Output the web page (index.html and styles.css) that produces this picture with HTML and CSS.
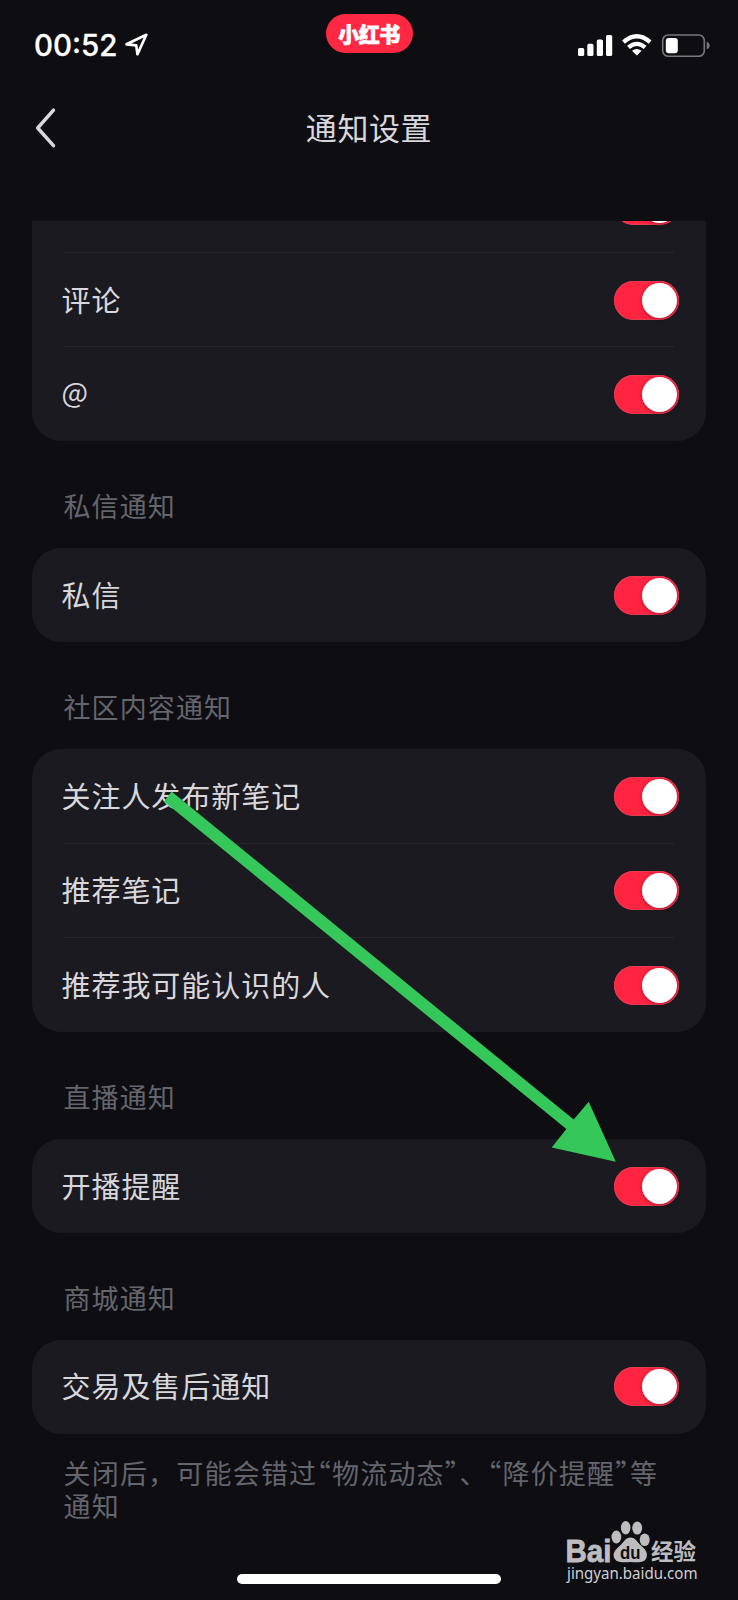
FILE: index.html
```html
<!DOCTYPE html>
<html lang="zh-CN">
<head>
<meta charset="utf-8">
<title>通知设置</title>
<link rel="stylesheet" href="styles.css">
</head>
<body>
<div class="screen">
  <header class="status">
    <div class="status-left">
      <span class="time">00:52</span>
      <svg class="location" width="24" height="24" viewBox="0 0 24 24"><path d="M1.5 11.3 21.3 1.8 12.5 21.2 11.2 12.4Z"/></svg>
    </div>
    <div class="badge">小红书</div>
    <svg class="status-icons" width="134" height="26" viewBox="576 32 134 26">
      <g fill="#fff">
        <rect x="578" y="48" width="6.2" height="8" rx="1.6"/>
        <rect x="587.3" y="43.8" width="6.2" height="12.2" rx="1.6"/>
        <rect x="596.8" y="39.4" width="6.2" height="16.6" rx="1.6"/>
        <rect x="606" y="35" width="6.2" height="21" rx="1.6"/>
        <path d="M636.8 55.6 632 50.8Q636.8 47.2 641.6 50.8Z"/>
      </g>
      <g fill="none" stroke="#fff" stroke-width="4.2">
        <path d="M623.5 42.1Q636.8 30.4 650.1 42.1"/>
        <path d="M628.5 47.3Q636.8 40.4 645.1 47.3"/>
      </g>
      <rect x="662.7" y="35" width="41.6" height="21.3" rx="5.5" fill="none" stroke="#77767a" stroke-width="1.6"/>
      <rect x="665.8" y="38" width="12" height="15.2" rx="3" fill="#fff"/>
      <path d="M706.7 41.6Q709.8 43 709.8 45.5T706.7 49.4Z" fill="#77767a"/>
    </svg>
  </header>

  <nav class="navbar">
    <svg class="back" width="24" height="42" viewBox="0 0 24 42"><path d="M19.5 3.2 3.7 21 19.5 38.6"/></svg>
    <h1 class="title">通知设置</h1>
  </nav>

  <main class="list">
    <section class="card card-scrolled">
      <div class="row"><span></span><i class="toggle"></i></div>
      <div class="row"><span>评论</span><i class="toggle"></i></div>
      <div class="row"><span class="at">@</span><i class="toggle"></i></div>
    </section>
    <h2 class="heading">私信通知</h2>
    <section class="card">
      <div class="row"><span>私信</span><i class="toggle"></i></div>
    </section>
    <h2 class="heading">社区内容通知</h2>
    <section class="card">
      <div class="row"><span>关注人发布新笔记</span><i class="toggle"></i></div>
      <div class="row"><span>推荐笔记</span><i class="toggle"></i></div>
      <div class="row"><span>推荐我可能认识的人</span><i class="toggle"></i></div>
    </section>
    <h2 class="heading">直播通知</h2>
    <section class="card">
      <div class="row"><span>开播提醒</span><i class="toggle"></i></div>
    </section>
    <h2 class="heading">商城通知</h2>
    <section class="card">
      <div class="row"><span>交易及售后通知</span><i class="toggle"></i></div>
    </section>
    <p class="note">关闭后，可能会错过<span class="half">“</span>物流动态<span class="half">”</span>、<span class="half">“</span>降价提醒<span class="half">”</span>等<br>通知</p>
  </main>
  <div class="home-indicator"></div>

  <svg class="arrow" width="460" height="380" viewBox="160 786 460 380">
    <path d="M171.6 791.6 573.7 1119.5 588.7 1101.7 615.8 1161.7 551.7 1147.6 566.4 1129 164 801.4Z"/>
  </svg>

  <svg class="watermark" width="140" height="70" viewBox="562 1518 140 70">
    <text class="wm-bai" x="565.5" y="1561.5" textLength="46" lengthAdjust="spacingAndGlyphs">Bai</text>
    <ellipse cx="616.4" cy="1537" rx="4.9" ry="6.4"/>
    <ellipse cx="625.7" cy="1527.7" rx="4.8" ry="6.8"/>
    <ellipse cx="637.2" cy="1528.1" rx="5" ry="6.5"/>
    <ellipse cx="644.7" cy="1539.8" rx="5" ry="6.3"/>
    <path d="M630.5 1537.5C625.5 1537.5 624 1542 620 1545.5 615.5 1549.5 612.5 1553 614 1557.5 616 1562.5 621 1562.5 630.5 1562 640 1562.5 645 1562.5 646.5 1557.5 648 1553 645.5 1549.5 641 1545.5 637 1542 635.5 1537.5 630.5 1537.5Z"/>
    <text class="wm-du" x="620" y="1558.5" textLength="20.5" lengthAdjust="spacingAndGlyphs">du</text>
    <text class="wm-cn" x="651" y="1560" textLength="45" lengthAdjust="spacingAndGlyphs">经验</text>
    <text class="wm-url" x="567" y="1579" textLength="130.5" lengthAdjust="spacingAndGlyphs">jingyan.baidu.com</text>
  </svg>
</div>
</body>
</html>
```
FILE: styles.css
```css
* { box-sizing: border-box; }

body {
  margin: 0;
  background: #0e0d12;
  font-family: "Noto Sans CJK SC", sans-serif;
  color: #d8d7db;
}

.screen {
  position: relative;
  display: flex;
  flex-direction: column;
  width: 738px;
  height: 1600px;
  overflow: hidden;
}

.status {
  display: grid;
  grid-template-columns: 1fr 87px 1fr;
  height: 90px;
  padding: 14px 28px 0 34px;
}

.status-left {
  display: flex;
  align-items: center;
  gap: 6px;
  height: 62px;
}

.time {
  width: 85px;
  font: 500 29.5px/36px Inter, sans-serif;
  letter-spacing: 0;
  color: #fff;
  white-space: nowrap;
  -webkit-text-stroke: 0.3px #fff;
}

.location path {
  fill: none;
  stroke: #fff;
  stroke-width: 2.7;
  stroke-linejoin: round;
}

.badge {
  height: 39px;
  margin-left: -3px;
  width: 87px;
  border-radius: 20px;
  background: #ff2843;
  color: #fff;
  font-size: 21px;
  font-weight: 900;
  line-height: 38px;
  letter-spacing: -0.5px;
  text-align: center;
  -webkit-text-stroke: 0.7px #fff;
}

.status-icons {
  justify-self: end;
  margin-top: 18px;
}

.navbar {
  display: grid;
  grid-template-columns: 60px 1fr 60px;
  align-items: center;
  height: 76px;
  padding: 0 34px;
}

.back path {
  fill: none;
  stroke: #d8d7de;
  stroke-width: 3.5;
  stroke-linecap: round;
  stroke-linejoin: round;
}

.title {
  margin: 0;
  padding-bottom: 3px;
  font-size: 31px;
  font-weight: 400;
  line-height: 44px;
  letter-spacing: 0.6px;
  text-align: center;
}

.list {
  flex: 1;
  margin-top: 55px;
  padding: 0 32px;
  overflow: hidden;
}

.card {
  padding: 0 27px 0 29.5px;
  border-radius: 29px;
  background: #1b1a20;
}

.card-scrolled { margin-top: -63px; }

.row {
  display: flex;
  align-items: center;
  justify-content: space-between;
  height: 94.7px;
  font-size: 29px;
  letter-spacing: 0.95px;
  background: linear-gradient(#26252c, #26252c) 1px 100% / 611px 1px no-repeat;
}

.row span { padding-bottom: 3px; }
.row .at { padding-bottom: 7px; font-size: 28px; }

.row:last-child {
  height: 93.9px;
  background: none;
}

.toggle {
  width: 65px;
  height: 39px;
  padding: 2px 2.5px;
  border-radius: 20px;
  background: #ff2442;
  box-shadow: inset 0 0 0 1px #e63a52;
}

.toggle::before {
  content: "";
  display: block;
  width: 35px;
  height: 35px;
  margin-left: auto;
  border-radius: 50%;
  background: #fff;
  box-shadow: 0 1px 4px rgba(60, 0, 15, 0.4);
}

.heading {
  height: 106.9px;
  margin: 0;
  padding: 45px 0 0 31.5px;
  font-size: 27px;
  font-weight: 400;
  line-height: 40px;
  letter-spacing: 1.1px;
  color: #64656d;
}

.note {
  margin: 23.5px 0 0;
  padding-left: 31.5px;
  font-size: 27px;
  line-height: 32.7px;
  letter-spacing: 1.2px;
  text-spacing-trim: space-all;
  white-space: nowrap;
  color: #64656d;
}

.half { font-feature-settings: "halt"; }

.home-indicator {
  width: 264px;
  height: 10px;
  margin: 0 auto 16px;
  border-radius: 5px;
  background: #fff;
}

.arrow {
  position: absolute;
  left: 160px;
  top: 786px;
  fill: #35c759;
}

.watermark {
  position: absolute;
  left: 562px;
  top: 1518px;
  fill: #bdbdbf;
}

.wm-bai {
  font: 700 31px "Liberation Sans", sans-serif;
  stroke: #bdbdbf;
  stroke-width: 0.8px;
}

.wm-du { font: 700 19px "Liberation Sans", sans-serif; fill: #0e0d12; }
.wm-cn { font: 700 23px "Noto Sans CJK SC", sans-serif; }
.wm-url { font: 400 16.5px "Noto Sans", sans-serif; fill: #d0d0d2; }
```
